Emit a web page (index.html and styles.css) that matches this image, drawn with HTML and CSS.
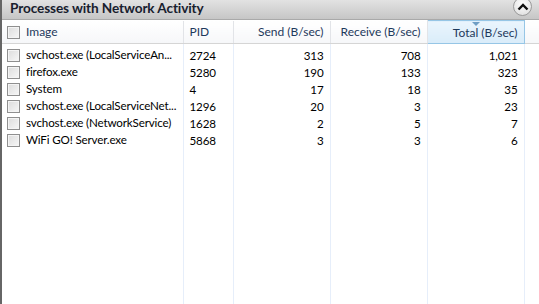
FILE: index.html
```html
<!DOCTYPE html>
<html lang="en">
<head>
    <meta charset="UTF-8">
    <title>Processes with Network Activity</title>
    <link rel="stylesheet" href="styles.css">
</head>
<body>
    <div class="panel">
        <div class="panel-title">
            <h1>Processes with Network Activity</h1>
            <span class="collapse-btn">
                <svg width="12" height="8" viewBox="0 0 12 8"><path d="M1.5 6.5 L6 2 L10.5 6.5" fill="none" stroke="#111" stroke-width="2.4"/></svg>
            </span>
        </div>
        <table class="grid">
            <colgroup>
                <col class="c-image">
                <col class="c-pid">
                <col class="c-num">
                <col class="c-num">
                <col class="c-num">
                <col>
            </colgroup>
            <thead>
                <tr>
                    <th class="name"><span class="check"></span>Image</th>
                    <th>PID</th>
                    <th class="num">Send (B/sec)</th>
                    <th class="num">Receive (B/sec)</th>
                    <th class="num sorted">Total (B/sec)</th>
                    <th class="blank"></th>
                </tr>
            </thead>
            <tbody>
                <tr class="gap"><td></td><td></td><td></td><td></td><td></td><td class="blank"></td></tr>
                <tr>
                    <td class="name"><span class="check"></span>svchost.exe (LocalServiceAn...</td>
                    <td>2724</td><td class="num">313</td><td class="num">708</td><td class="num">1,021</td><td class="blank"></td>
                </tr>
                <tr>
                    <td class="name"><span class="check"></span>firefox.exe</td>
                    <td>5280</td><td class="num">190</td><td class="num">133</td><td class="num">323</td><td class="blank"></td>
                </tr>
                <tr>
                    <td class="name"><span class="check"></span>System</td>
                    <td>4</td><td class="num">17</td><td class="num">18</td><td class="num">35</td><td class="blank"></td>
                </tr>
                <tr>
                    <td class="name"><span class="check"></span>svchost.exe (LocalServiceNet...</td>
                    <td>1296</td><td class="num">20</td><td class="num">3</td><td class="num">23</td><td class="blank"></td>
                </tr>
                <tr>
                    <td class="name"><span class="check"></span>svchost.exe (NetworkService)</td>
                    <td>1628</td><td class="num">2</td><td class="num">5</td><td class="num">7</td><td class="blank"></td>
                </tr>
                <tr>
                    <td class="name"><span class="check"></span>WiFi GO! Server.exe</td>
                    <td>5868</td><td class="num">3</td><td class="num">3</td><td class="num">6</td><td class="blank"></td>
                </tr>
                <tr class="filler"><td></td><td></td><td></td><td></td><td></td><td class="blank"></td></tr>
            </tbody>
        </table>
    </div>
</body>
</html>
```

FILE: styles.css
```css
* {
    margin: 0;
    padding: 0;
    box-sizing: border-box;
}

html, body {
    height: 100%;
    overflow: hidden;
}

body {
    font-family: "Segoe UI", Lato, "Noto Sans", sans-serif;
    font-size: 12px;
    color: #000;
    background: #fff;
}

.panel {
    height: 100%;
    display: flex;
    flex-direction: column;
    border-left: 2px solid #666;
}

.panel-title {
    height: 20px;
    flex: none;
    display: flex;
    align-items: center;
    justify-content: space-between;
    padding: 0 7px 0 8px;
    background: linear-gradient(#e2e2e2, #c6c6c6);
    border-bottom: 1px solid #a9a9a9;
}

.panel-title h1 {
    font-size: 13.6px;
    font-weight: bold;
    color: #18202e;
    margin-top: -3px;
    letter-spacing: -0.1px;
}

.collapse-btn {
    width: 19px;
    height: 19px;
    margin-top: -7px;
    border-radius: 50%;
    border: 1px solid #9a9a9a;
    background: radial-gradient(circle at 50% 35%, #ffffff, #dadada);
    display: flex;
    align-items: center;
    justify-content: center;
    padding-top: 2px;
}

.grid {
    flex: 1;
    width: 100%;
    border-collapse: collapse;
    table-layout: fixed;
}

.c-image { width: 181px; }
.c-pid { width: 50px; }
.c-num { width: 97px; }

.grid th {
    height: 23px;
    font-weight: normal;
    color: #1e395b;
    text-align: left;
    padding: 0 6px;
    background: linear-gradient(#ffffff, #f6f7f9);
    border-right: 1px solid #e2e4e8;
    border-bottom: 1px solid #d5d5d5;
    white-space: nowrap;
    position: relative;
}

.grid th.sorted {
    background: linear-gradient(#eaf5fd, #d9ecf9);
    border: 1px solid #96c6e6;
}

.grid th.sorted::before {
    content: "";
    position: absolute;
    top: 1px;
    left: 50%;
    margin-left: -4px;
    border-left: 4px solid transparent;
    border-right: 4px solid transparent;
    border-top: 4px solid #6f9ec4;
}

.grid td {
    height: 17px;
    padding: 0 6px;
    font-size: 11.6px;
    letter-spacing: -0.15px;
    white-space: nowrap;
    overflow: hidden;
    border-right: 1px solid #e6eefa;
}

.grid .num {
    text-align: right;
    padding-right: 6px;
}

.grid .name {
    padding-left: 5px;
}

.grid .blank {
    border-right: none;
}

.grid tr.gap td {
    height: 3px;
}

.grid tr.filler td {
    height: auto;
}

.check {
    display: inline-block;
    width: 13px;
    height: 13px;
    border: 1px solid #8f8f8f;
    background: linear-gradient(135deg, #dcdcdc, #f7f7f7);
    box-shadow: inset 0 0 0 1px #f4f4f4;
    vertical-align: -3px;
    margin-right: 6px;
}
```
